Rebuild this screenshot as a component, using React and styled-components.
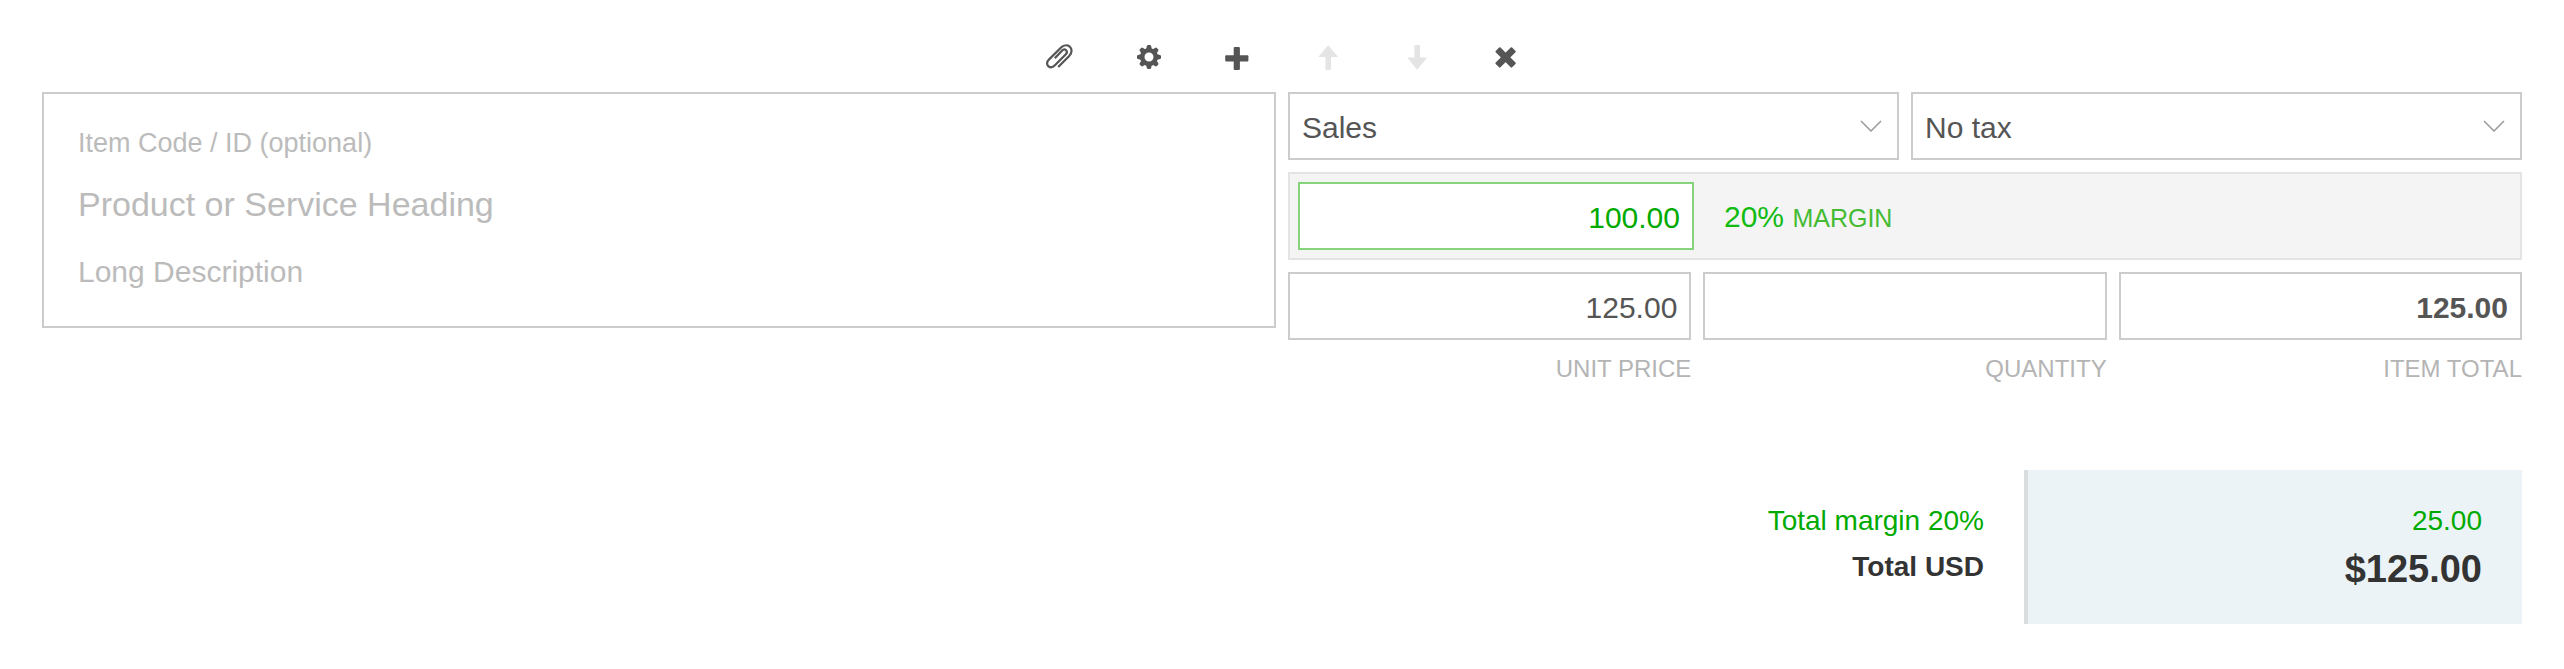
import React from 'react'
import styled, {createGlobalStyle, css} from 'styled-components'


const GlobalStl = createGlobalStyle`
  *, *::before, *::after {
    box-sizing: border-box;
  }

  body {
    margin: 0;
    background: #fff;
    color: #555;
    font-family: "Liberation Sans", Arial, sans-serif;
  }
`

const PageStl = styled.main`
  display: flex;
  flex-direction: column;
  padding: 24px 42px;
`

const ToolbarStl = styled.div`
  display: flex;
  justify-content: center;
  margin-bottom: 2px;
`

const ToolButtonStl = styled.button`
  display: flex;
  align-items: center;
  justify-content: center;
  width: 89px;
  height: 66px;
  padding: 0;
  border: 0;
  background: none;
  color: #555;
  cursor: pointer;

  &:disabled {
    color: #e4e4e4;
    cursor: default;
  }
`

const IconStl = styled.svg`
  display: block;
  width: 28px;
  height: 28px;
  fill: currentColor;
`

const LineItemStl = styled.section`
  display: grid;
  grid-template-columns: minmax(0, 1fr) minmax(0, 1fr);
  align-items: start;
  gap: 12px;
`

const DescriptionStl = styled.div`
  display: flex;
  flex-direction: column;
  gap: 18px;
  padding: 29px 34px 27px;
  border: 2px solid #ccc;
`

const placeholderText = css`
  width: 100%;
  padding: 0;
  border: 0;
  background: none;
  color: #555;
  font-family: inherit;

  &::placeholder {
    color: #bbb;
    opacity: 1;
  }
`

const ItemCodeStl = styled.input`
  ${placeholderText}
  height: 40px;
  font-size: 27px;
`

const HeadingInputStl = styled.input`
  ${placeholderText}
  height: 46px;
  font-size: 34px;
`

const LongTextStl = styled.textarea`
  ${placeholderText}
  height: 54px;
  font-size: 30px;
  line-height: 54px;
  resize: none;
  overflow: hidden;
`

const DetailsStl = styled.div`
  display: flex;
  flex-direction: column;
  gap: 12px;
`

const RowStl = styled.div`
  display: flex;
  gap: 12px;
`

const fieldBox = css`
  width: 100%;
  height: 68px;
  border: 2px solid #ccc;
  border-radius: 0;
  background: #fff;
  color: #555;
  font-family: inherit;
  font-size: 30px;
`

const SelectWrapStl = styled.div`
  position: relative;
  flex: 1 1 0;
`

const SelectStl = styled.select`
  ${fieldBox}
  display: block;
  padding: 3px 60px 0 12px;
  appearance: none;
`

const ChevronStl = styled.svg`
  position: absolute;
  top: 28px;
  right: 17px;
  width: 22px;
  height: 12px;
  fill: none;
  stroke: #999;
  stroke-width: 1.5;
  pointer-events: none;
`

const MarginPanelStl = styled.div`
  display: flex;
  align-items: center;
  gap: 30px;
  padding: 8px;
  border: 2px solid #e4e4e4;
  background: #f4f4f4;
`

const NumberInputStl = styled.input`
  ${fieldBox}
  padding: 3px 12px 0;
  text-align: right;
  font-weight: ${({$strong}) => $strong ? 700 : 400};
`

const CostInputStl = styled(NumberInputStl)`
  width: 396px;
  border-color: #85d47c;
  color: #0a0;
`

const MarginTextStl = styled.span`
  padding-top: 3px;
  color: #1b1;
  font-size: 30px;
  line-height: 36px;

  small {
    color: #4b3;
    font-size: 25px;
  }
`

const FieldStl = styled.label`
  display: flex;
  flex-direction: column-reverse;
  flex: 1 1 0;
  gap: 14px;
  color: #b4b4b4;
  font-size: 24px;
  line-height: 30px;
  text-align: right;
`

const TotalsStl = styled.section`
  display: grid;
  grid-template-columns: 1fr 498px;
  margin-top: 86px;
`

const TotalsColumnStl = styled.div`
  display: flex;
  flex-direction: column;
  padding: 31px 40px 27px;
  text-align: right;

  ${({$filled}) => $filled && css`
    border-left: 4px solid #dadcde;
    background: #ebf3f7;
  `}
`

const MarginTotalStl = styled.span`
  color: #0a0;
  font-size: 28px;
  line-height: 40px;
`

const GrandTotalStl = styled.strong`
  color: #333;
  font-size: ${({$big}) => $big ? '38px' : '28px'};
  line-height: ${({$big}) => $big ? '56px' : '52px'};
`


const Icon = ({children}) => (
  <IconStl viewBox="0 0 28 28" aria-hidden="true">{children}</IconStl>
)

const ClipIcon = () => (
  <Icon>
    <path
      d="M12.2 24 L23.2 13 C26.6 9.5 26 5.4 23.6 3.5 C21 1.6 17.4 2.2 14.8 4.8 L2.9 16.6 C.6 19 .6 21.5 2.3 23.1 C4.1 24.8 6.8 24.4 8.9 22.3 L19.6 11.6 C21.2 9.9 21.1 8.2 20.1 7.2 C18.9 6.1 17.1 6.5 15.7 7.9 L8.8 15.2"
      fill="none"
      stroke="currentColor"
      strokeWidth="2.2"
    />
  </Icon>
)

const GearIcon = () => (
  <Icon>
    <circle cx="14" cy="14" r="6.8" fill="none" stroke="currentColor" strokeWidth="4.6" />
    {[0, 45, 90, 135, 180, 225, 270, 315].map(angle => (
      <path
        key={angle}
        d="M10.8 7.5 L11.9 3 Q12.1 2 13.1 2 H14.9 Q15.9 2 16.1 3 L17.2 7.5 Z"
        transform={`rotate(${angle} 14 14)`}
      />
    ))}
  </Icon>
)

const PlusIcon = () => (
  <Icon>
    <rect x="1.2" y="12.3" width="23.2" height="6.2" rx="1" />
    <rect x="9.7" y="4" width="6.2" height="23" rx="1" />
  </Icon>
)

const UpIcon = () => (
  <Icon>
    <path d="M15.2 2.2 L24.8 13.4 Q24.8 14 24.2 14 H18 V26.2 Q18 27 17.2 27 H13.2 Q12.4 27 12.4 26.2 V14 H6.2 Q5.6 14 5.6 13.4 Z" />
  </Icon>
)

const DownIcon = () => (
  <Icon>
    <path d="M15.2 26.8 L24.8 15 Q24.8 14.4 24.2 14.4 H18 V2.8 Q18 2 17.2 2 H13.2 Q12.4 2 12.4 2.8 V14.4 H6.2 Q5.6 14.4 5.6 15 Z" />
  </Icon>
)

const CrossIcon = () => (
  <Icon>
    <g transform="rotate(45 14.6 14.4)">
      <rect x="3" y="11" width="23.2" height="6.8" rx="1" />
      <rect x="11.2" y="2.8" width="6.8" height="23.2" rx="1" />
    </g>
  </Icon>
)

const tools = [
  {label: 'Attach file', Glyph: ClipIcon},
  {label: 'Settings', Glyph: GearIcon},
  {label: 'Add item', Glyph: PlusIcon},
  {label: 'Move up', Glyph: UpIcon, disabled: true},
  {label: 'Move down', Glyph: DownIcon, disabled: true},
  {label: 'Remove item', Glyph: CrossIcon},
]

const Dropdown = ({label, value}) => (
  <SelectWrapStl>
    <SelectStl aria-label={label} defaultValue={value}>
      <option>{value}</option>
    </SelectStl>
    <ChevronStl viewBox="0 0 22 12" aria-hidden="true">
      <path d="M1 1 L11 11 L21 1" />
    </ChevronStl>
  </SelectWrapStl>
)

const Field = ({label, value, strong}) => (
  <FieldStl>
    {label}
    <NumberInputStl type="text" defaultValue={value} $strong={strong} />
  </FieldStl>
)


export default function App() {
  return (
    <>
      <GlobalStl />
      <PageStl>
        <ToolbarStl role="toolbar">
          {tools.map(({label, Glyph, disabled}) => (
            <ToolButtonStl key={label} type="button" aria-label={label} disabled={disabled}>
              <Glyph />
            </ToolButtonStl>
          ))}
        </ToolbarStl>

        <LineItemStl>
          <DescriptionStl>
            <ItemCodeStl aria-label="Item code" placeholder="Item Code / ID (optional)" />
            <HeadingInputStl aria-label="Heading" placeholder="Product or Service Heading" />
            <LongTextStl aria-label="Description" rows={1} placeholder="Long Description" />
          </DescriptionStl>

          <DetailsStl>
            <RowStl>
              <Dropdown label="Account" value="Sales" />
              <Dropdown label="Tax" value="No tax" />
            </RowStl>

            <MarginPanelStl>
              <CostInputStl type="text" aria-label="Cost" defaultValue="100.00" />
              <MarginTextStl>20% <small>MARGIN</small></MarginTextStl>
            </MarginPanelStl>

            <RowStl>
              <Field label="UNIT PRICE" value="125.00" />
              <Field label="QUANTITY" value="" />
              <Field label="ITEM TOTAL" value="125.00" strong />
            </RowStl>
          </DetailsStl>
        </LineItemStl>

        <TotalsStl>
          <TotalsColumnStl>
            <MarginTotalStl>Total margin 20%</MarginTotalStl>
            <GrandTotalStl>Total USD</GrandTotalStl>
          </TotalsColumnStl>
          <TotalsColumnStl $filled>
            <MarginTotalStl>25.00</MarginTotalStl>
            <GrandTotalStl $big>$125.00</GrandTotalStl>
          </TotalsColumnStl>
        </TotalsStl>
      </PageStl>
    </>
  )
}
